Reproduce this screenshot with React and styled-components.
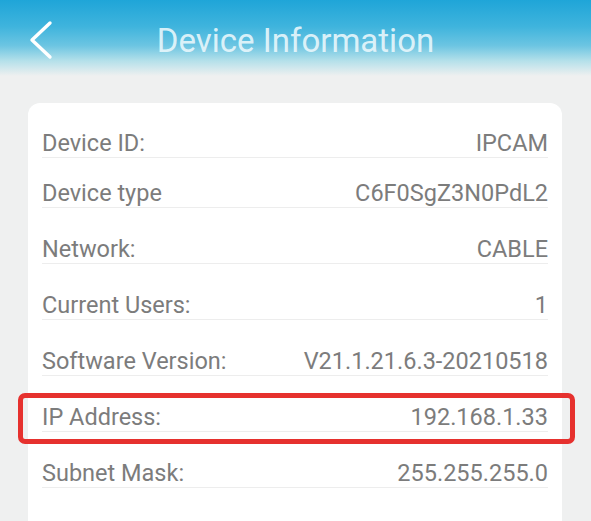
import React from "react"
import styled, { createGlobalStyle } from "styled-components"

const Global = createGlobalStyle`
html, body {
    margin: 0;
    padding: 0;
    background-color: #eff0f0;
    font-family: Roboto, "Liberation Sans", Arial, sans-serif;
}
* {
    box-sizing: border-box;
}
`

// ---------- page ----------
const Page = styled.div`
min-height: 100vh;
display: flex;
flex-direction: column;
background-color: #eff0f0;
`

// ---------- header ----------
const Header = styled.header`
height: 76px;
display: grid;
grid-template-columns: 1fr auto 1fr;
align-items: start;
padding: 20px 28px 0;
background: linear-gradient(
    to bottom,
    #1fa5d8 0%,
    #3fb4dd 35%,
    #6cc5e2 60%,
    #b4e0ea 80%,
    #eff0f0 100%
);
`

const BackButton = styled.button`
justify-self: start;
width: 28px;
height: 40px;
padding: 0;
border: none;
background: none;
cursor: pointer;
`

const Title = styled.h1`
margin: 1px 0 0;
font-size: 33px;
line-height: 39px;
font-weight: 400;
color: rgba(235, 248, 252, 0.9);
white-space: nowrap;
`

// ---------- card ----------
const Content = styled.main`
flex: 1;
display: flex;
padding: 27px 29px 0 28px;
`

const Card = styled.section`
flex: 1;
background-color: #fff;
border-radius: 12px 12px 0 0;
padding: 0 14px;
`

const Row = styled.div`
position: relative;
display: flex;
justify-content: space-between;
align-items: flex-end;
padding-top: ${props => props.pad || '27px'};
border-bottom: 1px solid #ededed;
font-size: 23.5px;
line-height: 28px;
color: #7c7c7c;
`

const Label = styled.span`
white-space: nowrap;
`

const Value = styled.span`
white-space: nowrap;
text-align: right;
`

const Highlight = styled.div`
position: absolute;
top: 17px;
bottom: -13px;
left: -24px;
right: -27px;
border: 5px solid #e6312e;
border-radius: 7px;
pointer-events: none;
`

const rows = [
    { label: 'Device ID:', value: 'IPCAM', pad: '26px' },
    { label: 'Device type', value: 'C6F0SgZ3N0PdL2', pad: '21px' },
    { label: 'Network:', value: 'CABLE' },
    { label: 'Current Users:', value: '1' },
    { label: 'Software Version:', value: 'V21.1.21.6.3-20210518' },
    { label: 'IP Address:', value: '192.168.1.33', marked: true },
    { label: 'Subnet Mask:', value: '255.255.255.0' },
]

const Chevron = () => (
    <svg width="28" height="40" viewBox="0 0 28 40" fill="none">
        <path
            d="M22 3 L4 20 L22 37"
            stroke="#fff"
            strokeWidth="3.4"
            strokeLinecap="round"
            strokeLinejoin="round"
        />
    </svg>
)

export default function App() {
    return (
        <Page>
            <Global />
            <Header>
                <BackButton aria-label="Back">
                    <Chevron />
                </BackButton>
                <Title>Device Information</Title>
                <span />
            </Header>
            <Content>
                <Card>
                    {rows.map(r => (
                        <Row key={r.label} pad={r.pad}>
                            <Label>{r.label}</Label>
                            <Value>{r.value}</Value>
                            {r.marked && <Highlight />}
                        </Row>
                    ))}
                </Card>
            </Content>
        </Page>
    )
}
